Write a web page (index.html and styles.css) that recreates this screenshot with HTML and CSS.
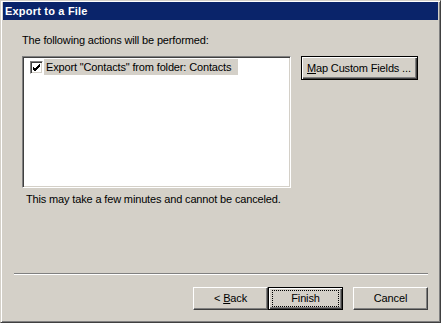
FILE: index.html
```html
<!DOCTYPE html>
<html lang="en">
  <head>
    <title>Export to a File</title>
    <link rel="stylesheet" href="styles.css">
  </head>
  <body>
    <div class="window">
      <div class="titlebar">Export to a File</div>

      <div class="panel">
        <p class="label">The following actions will be performed:</p>

        <div class="row">
          <div class="listbox">
            <div class="item">
              <span class="check">
                <svg width="9" height="9" viewBox="0 0 9 9">
                  <path d="M1 4 L3 6 L8 1 M1 5 L3 7 L8 2 M1 6 L3 8 L8 3" stroke="#000" stroke-width="1" fill="none" shape-rendering="crispEdges"/>
                </svg>
              </span>
              <span class="item-text">Export "Contacts" from folder: Contacts</span>
            </div>
          </div>
          <button class="btn btn-default map"><u>M</u>ap Custom Fields ...</button>
        </div>

        <p class="note">This may take a few minutes and cannot be canceled.</p>

        <div class="separator"></div>

        <div class="buttons">
          <button class="btn">&lt; <u>B</u>ack</button>
          <button class="btn btn-default"><span class="focus">Finish</span></button>
          <button class="btn cancel">Cancel</button>
        </div>
      </div>
    </div>
  </body>
</html>
```

FILE: styles.css
```css
:root {
  --face: #d4d0c8;
  --shadow: #808080;
  --dark: #404040;
  --title: #0a246a;
}

html, body {
  margin: 0;
  background: var(--face);
}

body {
  font-family: "Liberation Sans", Arial, sans-serif;
  font-size: 11px;
  line-height: 13px;
  letter-spacing: -0.15px;
  color: #000;
}

.window {
  box-sizing: border-box;
  width: 441px;
  height: 323px;
  display: flex;
  flex-direction: column;
  padding: 1px 2px 2px 2px;
  border: 1px solid;
  border-color: var(--face) var(--dark) var(--dark) var(--face);
  box-shadow: inset 1px 1px #fff, inset -1px -1px var(--shadow);
  background: var(--face);
}

.titlebar {
  height: 18px;
  line-height: 18px;
  padding-left: 2px;
  background: var(--title);
  color: #fff;
  font-weight: bold;
  letter-spacing: 0.2px;
}

.panel {
  flex: 1;
  display: flex;
  flex-direction: column;
  padding: 0 10px 10px 11px;
}

.label {
  margin: 14px 0 0 8px;
}

.row {
  display: flex;
  align-items: flex-start;
  margin: 9px 0 0 8px;
}

.listbox {
  box-sizing: border-box;
  width: 269px;
  height: 132px;
  background: #fff;
  border: 1px solid;
  border-color: var(--shadow) #fff #fff var(--shadow);
  box-shadow: inset 1px 1px var(--dark), inset -1px -1px var(--face);
  padding: 2px 2px;
}

.item {
  display: flex;
  align-items: center;
  height: 16px;
}

.check {
  box-sizing: border-box;
  width: 13px;
  height: 13px;
  margin: 0 1px 0 5px;
  border: 1px solid;
  border-color: var(--shadow) #fff #fff var(--shadow);
  box-shadow: inset 1px 1px var(--dark), inset -1px -1px var(--face);
  background: #fff;
  display: flex;
  align-items: center;
  justify-content: center;
}

.item-text {
  background: var(--face);
  height: 16px;
  line-height: 16px;
  padding: 0 7px 0 2px;
}

.btn {
  box-sizing: border-box;
  width: 75px;
  height: 23px;
  padding: 0;
  font: inherit;
  letter-spacing: inherit;
  color: #000;
  background: var(--face);
  border: 1px solid;
  border-color: #fff var(--dark) var(--dark) #fff;
  box-shadow: inset -1px -1px var(--shadow);
}

.btn-default {
  border: 1px solid #000;
  box-shadow: inset 1px 1px #fff, inset -1px -1px var(--dark), inset -2px -2px var(--shadow);
}

.map {
  width: 117px;
  height: 24px;
  margin-left: 10px;
  text-align: left;
  padding-left: 5px;
}

.focus {
  display: block;
  margin: 0 3px;
  height: 15px;
  line-height: 15px;
  border: 1px dotted #000;
}

.note {
  margin: 5px 0 0 12px;
}

.separator {
  margin-top: auto;
  height: 0;
  border-top: 1px solid var(--shadow);
  border-bottom: 1px solid #fff;
}

.buttons {
  display: flex;
  justify-content: flex-end;
  margin-top: 12px;
}

.cancel {
  margin-left: 10px;
}
```
